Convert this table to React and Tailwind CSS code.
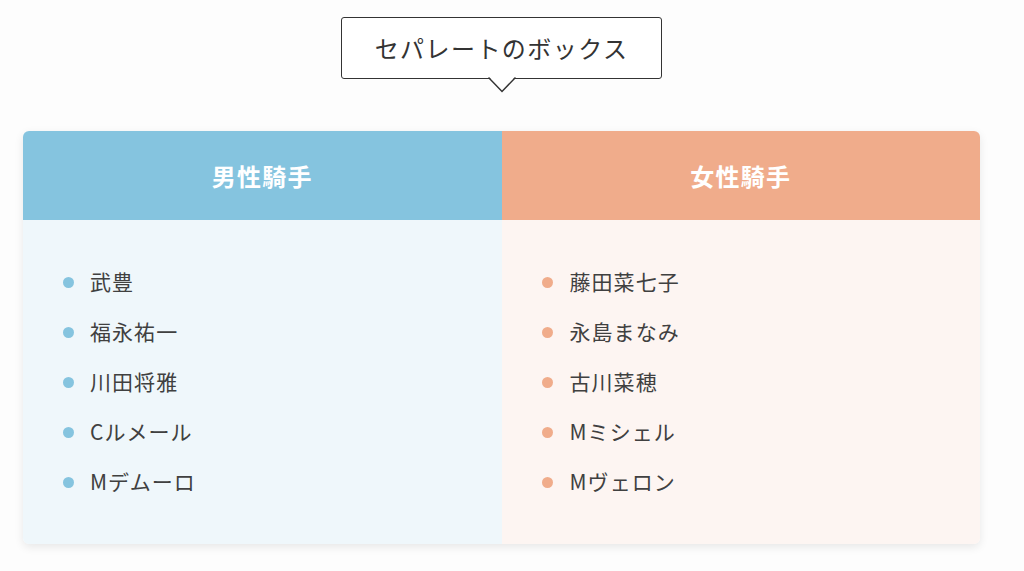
export default function App() {
  const men = ["武豊", "福永祐一", "川田将雅", "Cルメール", "Mデムーロ"];
  const women = ["藤田菜七子", "永島まなみ", "古川菜穂", "Mミシェル", "Mヴェロン"];
  const font = { fontFamily: '"Noto Sans CJK JP", "Noto Sans", sans-serif' };
  return (
    <div className="min-h-[571px] w-[1024px] bg-[#fdfdfd] pt-[17px]" style={font}>
      <div className="ml-[23px] w-[957px] flex flex-col items-center">
        <div className="relative">
          <div className="h-[62px] w-[321px] border-[1.5px] border-[#333] rounded-[3px] bg-white flex items-center justify-center text-[24px] tracking-[0.06em] text-[#333]">
            セパレートのボックス
          </div>
          <svg className="absolute left-1/2 -translate-x-1/2 top-[59px]" width="28" height="18" viewBox="0 0 28 18">
            <polygon points="0,0 14,15 28,0" fill="white" />
            <polyline points="0.5,1.5 14,15.5 27.5,1.5" fill="none" stroke="#333" strokeWidth="1.5" />
          </svg>
        </div>
        <div className="mt-[52px] w-full grid grid-cols-2 rounded-[6px] overflow-hidden shadow-[0_3px_10px_rgba(0,0,0,0.09)]">
          <div className="flex flex-col">
            <div className="h-[89px] bg-[#85c4df] flex items-center justify-center text-white font-bold text-[24px] tracking-[0.05em]">
              男性騎手
            </div>
            <ul className="bg-[#eff7fb] pt-[37px] pb-[37px] pl-[40px] flex flex-col">
              {men.map((n) => (
                <li key={n} className="h-[50px] flex items-center gap-[16px] text-[21px] tracking-[0.05em] text-[#404040]">
                  <span className="w-[11px] h-[11px] rounded-full bg-[#85c4df] shrink-0" />
                  {n}
                </li>
              ))}
            </ul>
          </div>
          <div className="flex flex-col">
            <div className="h-[89px] bg-[#f0ac8b] flex items-center justify-center text-white font-bold text-[24px] tracking-[0.05em]">
              女性騎手
            </div>
            <ul className="bg-[#fdf5f2] pt-[37px] pb-[37px] pl-[40px] flex flex-col">
              {women.map((n) => (
                <li key={n} className="h-[50px] flex items-center gap-[17px] text-[21px] tracking-[0.05em] text-[#404040]">
                  <span className="w-[11px] h-[11px] rounded-full bg-[#f0ac8b] shrink-0" />
                  {n}
                </li>
              ))}
            </ul>
          </div>
        </div>
      </div>
    </div>
  );
}
